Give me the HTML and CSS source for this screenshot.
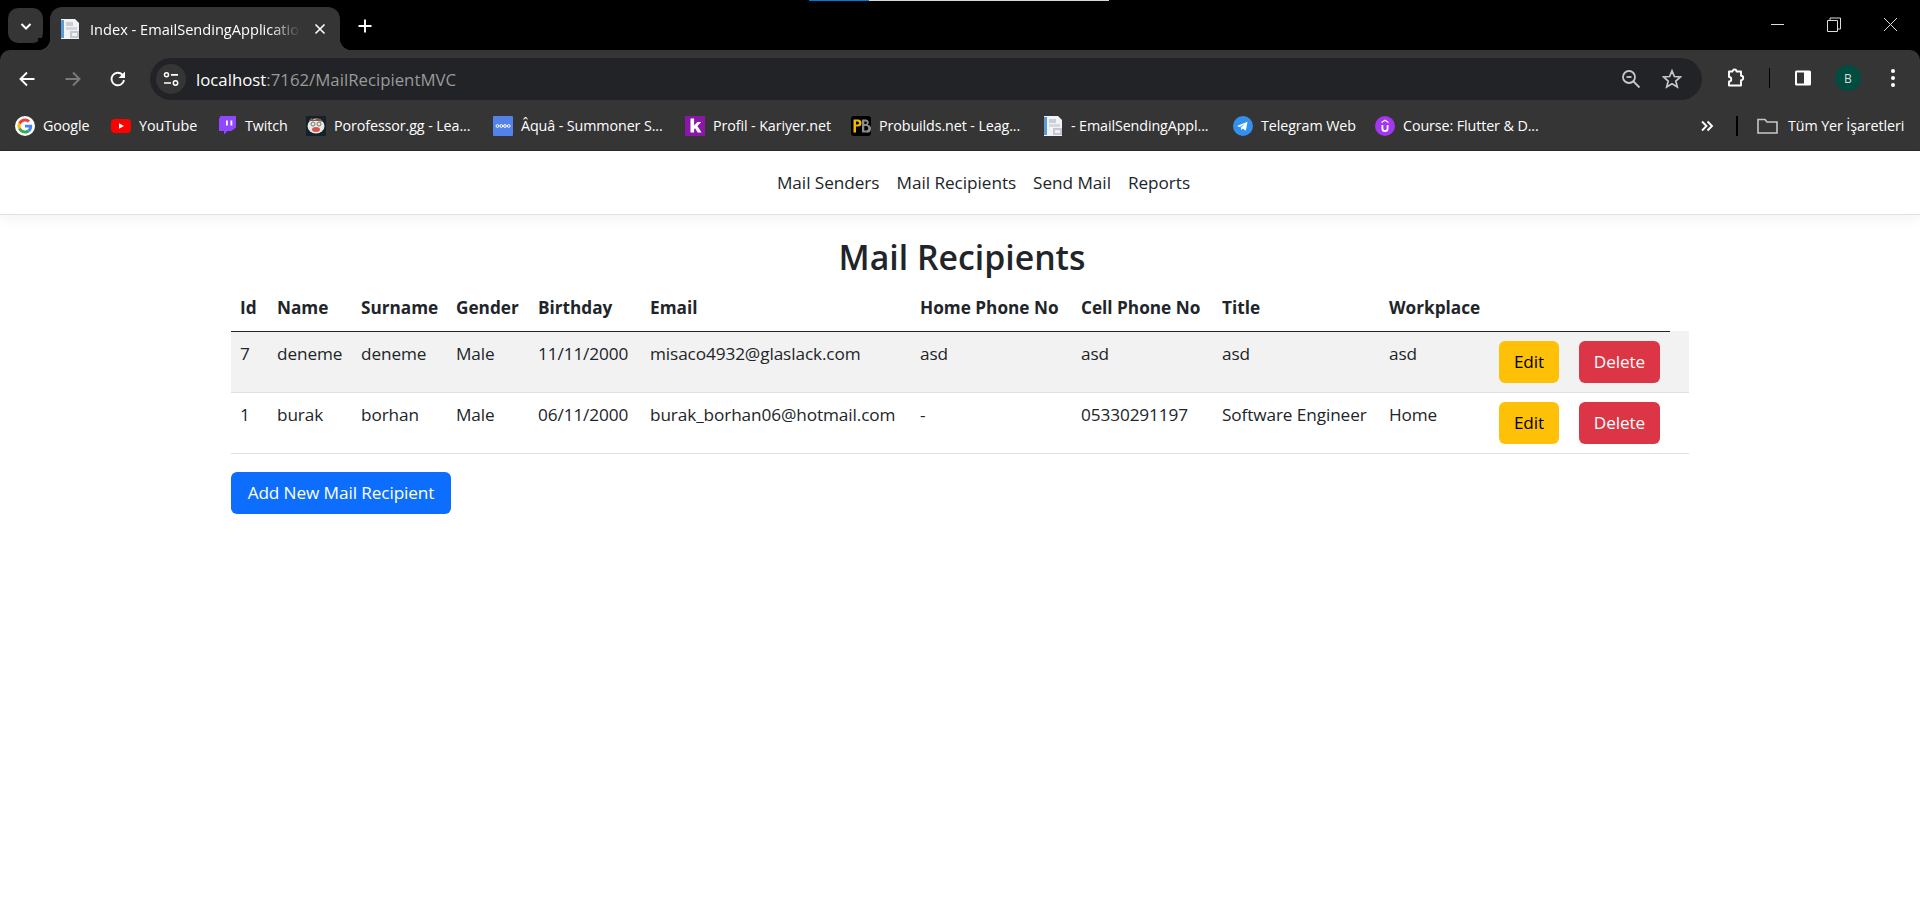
FILE: index.html
```html
<!DOCTYPE html>
<html>
  <head>
    <meta charset="utf-8" />
    <title>Index - EmailSendingApplication</title>
    <link rel="stylesheet" href="styles.css">
  </head>
  <body>
    <svg class="defs" width="0" height="0">
      <symbol id="doc" viewBox="0 0 20 20">
        <path fill="#f1f3f6" d="M1 0h14l4 4v16H1z" />
        <rect fill="#5b9bd5" x="1" y="1" width="3" height="18" />
        <rect fill="#c9ced6" x="6" y="3" width="7" height="4" />
        <rect fill="#d5d9df" x="6" y="8" width="11" height="3" />
        <rect fill="#c4c9d0" x="10" y="12" width="9" height="7" />
        <rect fill="#eef0f3" x="12" y="14" width="5" height="3" />
      </symbol>
    </svg>

    <header class="browser">
      <div class="tabstrip">
        <div class="load-bar"><span class="load-blue"></span><span class="load-white"></span></div>
        <button class="tab-search">
          <svg width="14" height="14" viewBox="0 0 14 14"><path d="M2.5 5l4.5 4.5L11.5 5" fill="none" stroke="#fff" stroke-width="2" /></svg>
        </button>
        <div class="tab">
          <svg class="tab-icon" width="20" height="20"><use href="#doc" /></svg>
          <span class="tab-title">Index - EmailSendingApplication</span>
          <svg class="tab-close" width="12" height="12" viewBox="0 0 12 12"><path d="M1.5 1.5l9 9M10.5 1.5l-9 9" stroke="#fff" stroke-width="1.6" /></svg>
        </div>
        <svg class="new-tab" width="16" height="16" viewBox="0 0 16 16"><path d="M8 1.5v13M1.5 8h13" stroke="#fff" stroke-width="1.9" /></svg>
        <div class="window-controls">
          <svg width="14" height="14" viewBox="0 0 14 14"><path d="M0 7.5h13" stroke="#ddd" stroke-width="1" /></svg>
          <svg width="14" height="16" viewBox="0 0 14 16"><path d="M.5 3.5h10v11H.5zM3 3.5V1h10.5v11H10.500" fill="none" stroke="#ddd" stroke-width="1" /></svg>
          <svg width="15" height="15" viewBox="0 0 15 15"><path d="M1 1l13 13M14 1L1 14" stroke="#ddd" stroke-width="1" /></svg>
        </div>
      </div>

      <div class="toolbar">
        <svg class="nav-icon back" width="18" height="18" viewBox="0 0 18 18"><path d="M16.500 9H2.500M9 2.500L2.500 9 9 15.500" fill="none" stroke="#fff" stroke-width="1.900" /></svg>
        <svg class="nav-icon forward" width="18" height="18" viewBox="0 0 18 18"><path d="M1.500 9h14M9 2.500L15.500 9 9 15.500" fill="none" stroke="#7b7b7b" stroke-width="1.900" /></svg>
        <svg class="nav-icon reload" width="18" height="18" viewBox="0 0 18 18"><path d="M15 10a6.300 6.300 0 1 1-1.600-5.300L15.500 7" fill="none" stroke="#fff" stroke-width="1.900" /><path d="M16 1.500V8H9.500z" fill="#fff" /></svg>
        <div class="omnibox">
          <span class="site-info">
            <svg width="18" height="18" viewBox="0 0 18 18"><circle cx="4.500" cy="4.800" r="2" fill="none" stroke="#fff" stroke-width="1.500" /><path d="M9 4.800h7M2 13h7" stroke="#fff" stroke-width="1.700" /><circle cx="13.500" cy="13" r="2.200" fill="none" stroke="#fff" stroke-width="1.500" /></svg>
          </span>
          <span class="url">localhost<span class="url-rest">:7162/MailRecipientMVC</span></span>
          <svg class="zoom-icon" width="20" height="20" viewBox="0 0 20 20"><circle cx="8" cy="8" r="6" fill="none" stroke="#c7c7c7" stroke-width="1.800" /><path d="M12.500 12.500l6 6" stroke="#c7c7c7" stroke-width="1.800" /><path d="M5.500 8h5" stroke="#c7c7c7" stroke-width="1.800" /></svg>
          <svg class="star-icon" width="20" height="20" viewBox="0 0 20 20"><path d="M10 1.800l2.400 5.700 6.100.5-4.700 4 1.500 6L10 14.800 4.700 18l1.500-6-4.700-4 6.100-.5z" fill="none" stroke="#c7c7c7" stroke-width="1.700" /></svg>
        </div>
        <svg class="ext-icon" width="20" height="20" viewBox="0 0 20 20"><path d="M3 3.500h3.500a2 2 0 0 1 4 0H15v4.300a2 2 0 0 1 0 4.400V17.500H3v-4a2.200 2.200 0 0 0 0-4.500z" fill="none" stroke="#fff" stroke-width="1.900" stroke-linejoin="round" /></svg>
        <span class="toolbar-sep"></span>
        <svg class="panel-icon" width="18" height="18" viewBox="0 0 18 18"><rect x="1" y="1.500" width="16" height="15" rx="1.500" fill="#fff" /><rect x="3" y="3.500" width="7" height="11" fill="#353535" /></svg>
        <span class="avatar">B</span>
        <svg class="menu-icon" width="6" height="20" viewBox="0 0 6 20"><circle cx="3" cy="3" r="2" fill="#fff" /><circle cx="3" cy="10" r="2" fill="#fff" /><circle cx="3" cy="17" r="2" fill="#fff" /></svg>
      </div>

      <div class="bookmarks">
        <a class="bm">
          <svg width="20" height="20" viewBox="-8 -8 64 64"><circle cx="24" cy="24" r="32" fill="#fff" /><path fill="#EA4335" d="M24 9.500c3.540 0 6.710 1.220 9.210 3.600l6.850-6.850C35.900 2.380 30.470 0 24 0 14.620 0 6.510 5.380 2.560 13.220l7.980 6.190C12.430 13.720 17.740 9.500 24 9.500z" /><path fill="#4285F4" d="M46.980 24.550c0-1.570-.15-3.090-.38-4.550H24v9.020h12.940c-.58 2.960-2.260 5.480-4.780 7.180l7.730 6c4.510-4.180 7.090-10.360 7.090-17.650z" /><path fill="#FBBC05" d="M10.530 28.590c-.48-1.450-.76-2.990-.76-4.590s.27-3.140.76-4.590l-7.980-6.190C.92 16.460 0 20.120 0 24c0 3.880.92 7.540 2.560 10.780l7.970-6.190z" /><path fill="#34A853" d="M24 48c6.480 0 11.930-2.130 16.030-5.810l-7.730-6c-2.150 1.450-4.920 2.300-8.300 2.300-6.260 0-11.570-4.220-13.470-9.910l-7.980 6.190C6.510 42.620 14.620 48 24 48z" /></svg>
          <span>Google</span>
        </a>
        <a class="bm">
          <svg width="20" height="20" viewBox="0 0 20 20"><rect y="3" width="20" height="14" rx="4" fill="#f00" /><path d="M8 7.200l5 2.800-5 2.800z" fill="#fff" /></svg>
          <span>YouTube</span>
        </a>
        <a class="bm">
          <svg width="20" height="20" viewBox="0 0 20 20"><path d="M3.500 0H19v11.500L14.500 15h-4L7 18.500V15H2V3z" fill="#9147ff" /><path d="M9 4.500h1.800v5H9zM13.500 4.500h1.800v5h-1.800z" fill="#fff" /></svg>
          <span>Twitch</span>
        </a>
        <a class="bm">
          <svg width="20" height="20" viewBox="0 0 20 20"><rect width="20" height="20" fill="#14202b" /><ellipse cx="10" cy="10" rx="8.500" ry="7.500" fill="#e4ebe0" /><path d="M2.500 5l3-3 3 2 3-2 3 1 3 3-5-1H7z" fill="#8a5a44" /><circle cx="7" cy="8" r="2" fill="none" stroke="#777" /><circle cx="13" cy="8" r="2" fill="none" stroke="#777" /><ellipse cx="10" cy="13.500" rx="4" ry="2.500" fill="#d9534f" /></svg>
          <span>Porofessor.gg - Lea...</span>
        </a>
        <a class="bm">
          <svg width="20" height="20" viewBox="0 0 20 20"><rect width="20" height="20" rx="1" fill="#5383e8" /><g fill="none" stroke="#fff" stroke-width="1"><circle cx="4.500" cy="10" r="1.400" /><circle cx="8.300" cy="10" r="1.400" /><circle cx="12" cy="10" r="1.400" /><circle cx="15.700" cy="10" r="1.400" /></g></svg>
          <span>Âquâ - Summoner S...</span>
        </a>
        <a class="bm">
          <svg width="20" height="20" viewBox="0 0 20 20"><rect width="20" height="20" fill="#8a17a8" /><path d="M5.500 2.500h3.600v7l3.200-3.500h4l-3.900 4 4.200 6.500h-4l-2.500-4.200-1 1v3.200H5.500z" fill="#fff" /></svg>
          <span>Profil - Kariyer.net</span>
        </a>
        <a class="bm">
          <svg width="20" height="20" viewBox="0 0 20 20"><rect width="20" height="20" rx="3" fill="#000" /><path d="M2.500 3.500h4.500a3.200 3.200 0 0 1 0 7H5v6H2.500zM5 5.500v3h1.500a1.500 1.500 0 0 0 0-3z" fill="#f5b800" fill-rule="evenodd" /><path d="M11 3.500h4a3 3 0 0 1 1.800 5.200A3.300 3.300 0 0 1 15.200 16.500H11zM13.300 5.500v2.500h1.300a1.200 1.200 0 0 0 0-2.500zM13.300 10v4.500h1.700a2.200 2.200 0 0 0 0-4.500z" fill="#8b8b8b" fill-rule="evenodd" /></svg>
          <span>Probuilds.net - Leag...</span>
        </a>
        <a class="bm">
          <svg width="20" height="20"><use href="#doc" /></svg>
          <span>- EmailSendingAppl...</span>
        </a>
        <a class="bm">
          <svg width="20" height="20" viewBox="0 0 20 20"><circle cx="10" cy="10" r="10" fill="#3390ec" /><path d="M4 10l10.500-4.300-1.700 9-3-2.200-1.600 1.500-.4-2.500 4.500-4-5.500 3.400z" fill="#fff" /></svg>
          <span>Telegram Web</span>
        </a>
        <a class="bm">
          <svg width="20" height="20" viewBox="0 0 20 20"><circle cx="10" cy="10" r="10" fill="#a435f0" /><path d="M6.500 9v3.500a3.500 3.500 0 0 0 7 0V9h-1.800v3.500a1.700 1.700 0 0 1-3.400 0V9zM10 3.500l3.500 2.300v1.500L10 5 6.500 7.300V5.800z" fill="#fff" /></svg>
          <span>Course: Flutter &amp; D...</span>
        </a>
        <svg class="bm-more" width="14" height="14" viewBox="0 0 14 14"><path d="M2 2.500L6.500 7 2 11.500M7.500 2.500L12 7l-4.500 4.500" fill="none" stroke="#fff" stroke-width="1.900" /></svg>
        <span class="bm-sep"></span>
        <a class="bm bm-all">
          <svg width="21" height="20" viewBox="0 0 21 20"><path d="M1 3.500h7l2 2.500h10v11H1z" fill="none" stroke="#c7c7c7" stroke-width="1.600" /></svg>
          <span>Tüm Yer İşaretleri</span>
        </a>
      </div>
    </header>

    <nav class="topnav">
      <a>Mail Senders</a>
      <a>Mail Recipients</a>
      <a>Send Mail</a>
      <a>Reports</a>
    </nav>

    <main class="content">
      <h1>Mail Recipients</h1>
      <table class="recipients">
        <colgroup>
          <col class="c-id" /><col class="c-name" /><col class="c-surname" /><col class="c-gender" />
          <col class="c-birthday" /><col class="c-email" /><col class="c-home" /><col class="c-cell" />
          <col class="c-title" /><col class="c-work" /><col class="c-edit" /><col class="c-delete" /><col class="c-pad" />
        </colgroup>
        <thead>
          <tr>
            <th>Id</th>
            <th>Name</th>
            <th>Surname</th>
            <th>Gender</th>
            <th>Birthday</th>
            <th>Email</th>
            <th>Home Phone No</th>
            <th>Cell Phone No</th>
            <th>Title</th>
            <th>Workplace</th>
            <th></th>
            <th></th>
          </tr>
        </thead>
        <tbody>
          <tr class="odd">
            <td>7</td>
            <td>deneme</td>
            <td>deneme</td>
            <td>Male</td>
            <td>11/11/2000</td>
            <td>misaco4932@glaslack.com</td>
            <td>asd</td>
            <td>asd</td>
            <td>asd</td>
            <td>asd</td>
            <td><a class="btn btn-edit">Edit</a></td>
            <td><a class="btn btn-delete">Delete</a></td>
            <td></td>
          </tr>
          <tr>
            <td>1</td>
            <td>burak</td>
            <td>borhan</td>
            <td>Male</td>
            <td>06/11/2000</td>
            <td>burak_borhan06@hotmail.com</td>
            <td>-</td>
            <td>05330291197</td>
            <td>Software Engineer</td>
            <td>Home</td>
            <td><a class="btn btn-edit">Edit</a></td>
            <td><a class="btn btn-delete">Delete</a></td>
            <td></td>
          </tr>
        </tbody>
      </table>
      <a class="btn btn-add">Add New Mail Recipient</a>
    </main>
  </body>
</html>
```

FILE: styles.css
```css
* {
  box-sizing: border-box;
  margin: 0;
  padding: 0;
}
body {
  background: #fff;
  color: #212529;
  font-family: "Open Sans", sans-serif;
  overflow: hidden;
}
.defs {
  display: block;
  height: 0;
}

/* browser chrome */
.browser {
  height: 151px;
  background: #000;
  color: #fff;
  border-bottom: 1px solid #2a2a2a;
}
.tabstrip {
  position: relative;
  height: 50px;
  display: flex;
  align-items: flex-start;
}
.load-bar {
  position: absolute;
  top: 0;
  left: 809px;
  display: flex;
  height: 1px;
}
.load-blue {
  width: 60px;
  background: #0078d4;
}
.load-white {
  width: 240px;
  background: #d8d8d8;
}
.tab-search {
  width: 35px;
  height: 35px;
  margin: 8px 0 0 8px;
  border: 0;
  border-radius: 10px;
  background: #353535;
  display: flex;
  align-items: center;
  justify-content: center;
}
.tab {
  position: relative;
  width: 290px;
  height: 43px;
  margin: 7px 0 0 7px;
  padding: 0 14px 0 10px;
  background: #353535;
  border-radius: 12px 12px 0 0;
  display: flex;
  align-items: center;
}
.tab::before,
.tab::after {
  content: "";
  position: absolute;
  bottom: 0;
  width: 12px;
  height: 12px;
}
.tab::before {
  left: -12px;
  background: radial-gradient(circle at 0 0, #000 12px, #353535 12.5px);
}
.tab::after {
  right: -12px;
  background: radial-gradient(circle at 100% 0, #000 12px, #353535 12.5px);
}
.tab-icon {
  flex: none;
}
.tab-title {
  flex: 1;
  margin: 0 13px 0 10px;
  font-size: 14.6px;
  white-space: nowrap;
  overflow: hidden;
  -webkit-mask-image: linear-gradient(to right, #000 85%, transparent);
  mask-image: linear-gradient(to right, #000 85%, transparent);
}
.tab-close {
  flex: none;
}
.new-tab {
  margin: 18px 0 0 17px;
}
.window-controls {
  margin-left: auto;
  width: 127px;
  height: 32px;
  margin-right: 22px;
  margin-top: 17px;
  display: flex;
  align-items: flex-start;
  justify-content: space-between;
}
.toolbar {
  height: 51px;
  padding-top: 8px;
  background: #353535;
  border-radius: 10px 10px 0 0;
  display: flex;
  align-items: flex-start;
}
.toolbar > svg,
.toolbar-sep,
.avatar {
  margin-top: 12px;
}
.back {
  margin-left: 18px;
}
.forward {
  margin-left: 28px;
}
.reload {
  margin-left: 27px;
}
.omnibox {
  width: 1552px;
  height: 42px;
  margin-left: 23px;
  padding: 0 20px 0 6px;
  background: #222326;
  border-radius: 21px;
  display: flex;
  align-items: center;
}
.site-info {
  width: 30px;
  height: 30px;
  border-radius: 50%;
  background: #353535;
  display: flex;
  align-items: center;
  justify-content: center;
}
.url {
  margin-left: 10px;
  font-size: 16.8px;
  color: #fff;
}
.url-rest {
  color: #9a9a9a;
}
.zoom-icon {
  margin-left: auto;
}
.star-icon {
  margin-left: 21px;
}
.ext-icon {
  margin-left: 24px;
  margin-top: 10px !important;
}
.toolbar-sep {
  width: 1px;
  height: 20px;
  margin-left: 23px;
  margin-top: 10px !important;
  background: #000;
}
.panel-icon {
  margin-left: 24px;
  margin-top: 11px !important;
}
.avatar {
  width: 26px;
  height: 26px;
  margin-left: 23px;
  margin-top: 7px !important;
  border-radius: 50%;
  background: #004d40;
  color: #ddd;
  font-size: 12px;
  display: flex;
  align-items: center;
  justify-content: center;
}
.menu-icon {
  margin-left: 29px;
  margin-top: 10px !important;
}
.bookmarks {
  height: 49px;
  padding-left: 15px;
  background: #353535;
  display: grid;
  grid-template-columns: 96px 106px 89px 187px 192px 166px 192px 190px 142px 326px 35px 21px auto;
  align-items: center;
  font-size: 14.3px;
  letter-spacing: -0.1px;
}
.bm {
  display: flex;
  align-items: center;
  gap: 8px;
  white-space: nowrap;
}
.bm-all {
  gap: 10px;
}
.bm-sep {
  width: 2px;
  height: 20px;
  background: #000;
}
.bm-more {
  margin-left: -1px;
}

/* page */
.topnav {
  height: 64px;
  border-bottom: 1px solid #dee2e6;
  box-shadow: 0 4px 13px rgba(0, 0, 0, 0.05);
  display: flex;
  justify-content: center;
  align-items: center;
  gap: 17px;
  padding: 0 0 1px 47px;
  font-size: 17.2px;
  letter-spacing: -0.05px;
}
.content {
  width: 1458px;
  margin: 0 auto;
  padding-top: 21px;
}
.content h1 {
  height: 42px;
  margin-bottom: 8px;
  padding-left: 4px;
  text-align: center;
  font-size: 33.8px;
  line-height: 42px;
  font-weight: 600;
}
.recipients {
  width: 1458px;
  table-layout: fixed;
  border-collapse: collapse;
  margin-bottom: 18px;
  font-size: 17.2px;
  letter-spacing: -0.1px;
}
.recipients th {
  height: 45px;
  padding: 7px 0 9px 9px;
  text-align: left;
  font-weight: 700;
  white-space: nowrap;
  letter-spacing: 0;
  border-bottom: 1px solid #212529;
}
.recipients td {
  height: 61px;
  padding: 9px 0 9px 9px;
  vertical-align: top;
  white-space: nowrap;
  border-bottom: 1px solid #dee2e6;
  line-height: 26px;
}
.recipients .odd td {
  background: #f2f2f2;
}
.c-id { width: 37px; }
.c-name { width: 84px; }
.c-surname { width: 95px; }
.c-gender { width: 82px; }
.c-birthday { width: 112px; }
.c-email { width: 270px; }
.c-home { width: 161px; }
.c-cell { width: 141px; }
.c-title { width: 167px; }
.c-work { width: 110px; }
.c-edit { width: 80px; }
.c-delete { width: 100px; }
.c-pad { width: 19px; }
.btn {
  display: inline-block;
  height: 42px;
  padding: 0 14px;
  border-radius: 6px;
  font-size: 17.2px;
  line-height: 42px;
  text-align: center;
  letter-spacing: -0.1px;
}
.btn-edit {
  width: 60px;
  padding: 0;
  background: #ffc107;
  color: #000;
}
.btn-delete {
  width: 81px;
  padding: 0;
  background: #dc3545;
  color: #fff;
}
.btn-add {
  width: 220px;
  height: 42px;
  padding: 0;
  background: #0d6efd;
  color: #fff;
}
```
